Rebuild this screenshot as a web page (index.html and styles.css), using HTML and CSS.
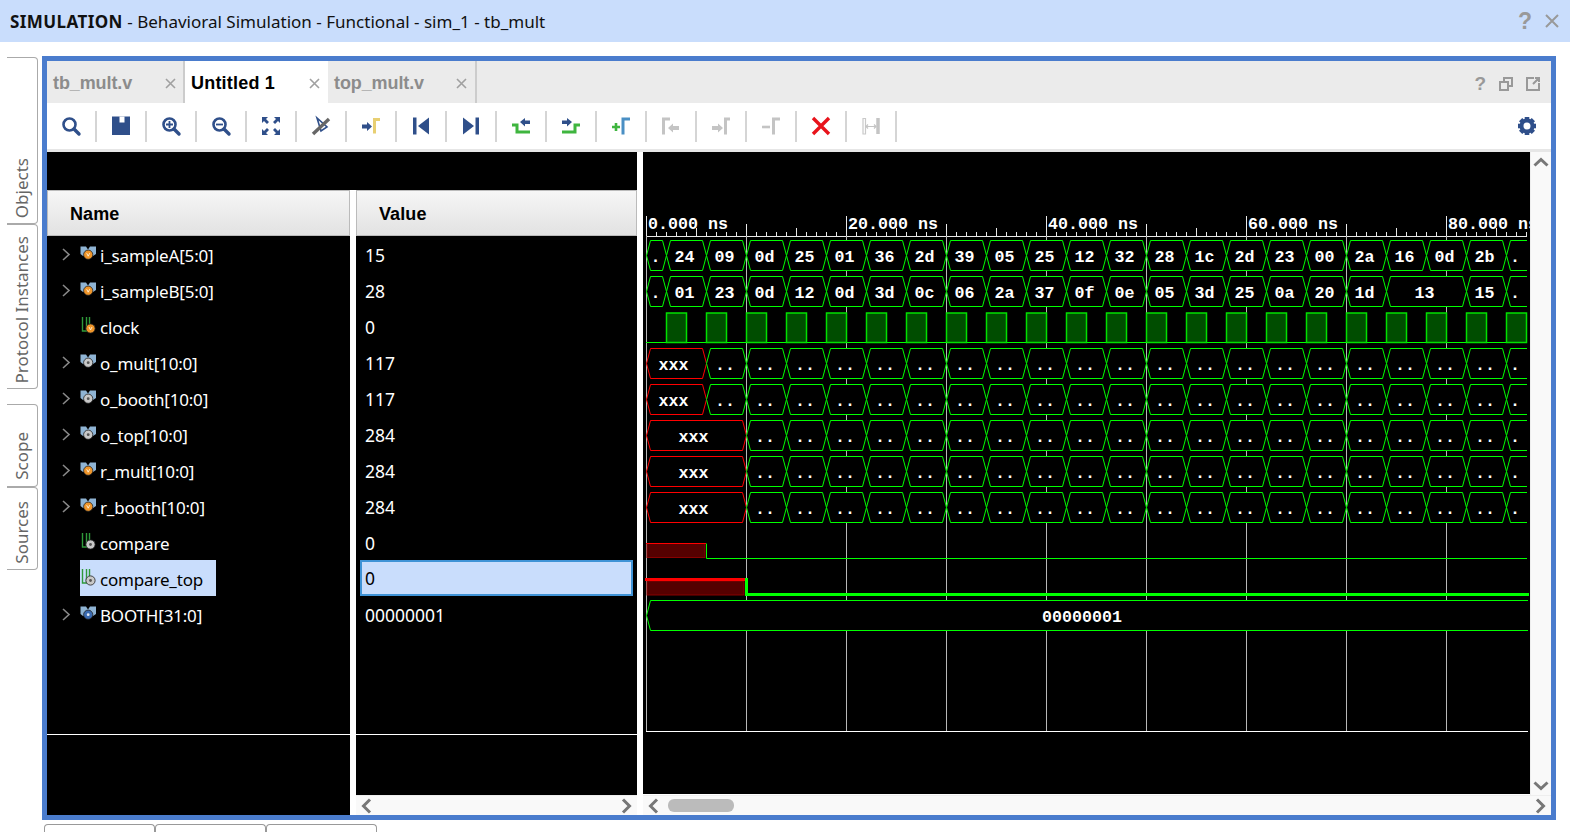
FILE: index.html
```html
<!DOCTYPE html>
<html lang="en">
<head>
    <meta charset="UTF-8">
    <title>Simulation</title>
    <link rel="stylesheet" href="styles.css">
</head>
<body>
    <div class="titlebar">
        <div class="title"><strong>SIMULATION</strong> - Behavioral Simulation - Functional - sim_1 - tb_mult</div>
        <span class="help">?</span>
        <svg class="title-close" width="14" height="14" viewBox="0 0 14 14"><path d="M1 1L13 13M13 1L1 13"/></svg>
    </div>

    <div class="workspace">
        <div class="sidetabs">
            <div class="sidegroup">
                <div class="sidetab objects"><span>Objects</span></div>
                <div class="sidetab protocol"><span>Protocol Instances</span></div>
            </div>
            <div class="sidegroup">
                <div class="sidetab scope"><span>Scope</span></div>
                <div class="sidetab sources"><span>Sources</span></div>
            </div>
        </div>

        <div class="panel">
            <div class="tabbar">
                <div class="tab tab-first"><span>tb_mult.v</span><svg class="tab-x" width="11" height="11" viewBox="0 0 11 11"><path d="M1 1L10 10M10 1L1 10"/></svg></div>
                <div class="tab tab-on"><span>Untitled 1</span><svg class="tab-x" width="11" height="11" viewBox="0 0 11 11"><path d="M1 1L10 10M10 1L1 10"/></svg></div>
                <div class="tab tab-last"><span>top_mult.v</span><svg class="tab-x" width="11" height="11" viewBox="0 0 11 11"><path d="M1 1L10 10M10 1L1 10"/></svg></div>
                <div class="tab-actions">
                    <span class="panel-help">?</span>
                    <svg width="14" height="14" viewBox="0 0 14 14" class="grey-icon"><rect x="1" y="5" width="8" height="8"/><path d="M5 5V1H13V9H9"/></svg>
                    <svg width="14" height="14" viewBox="0 0 14 14" class="grey-icon"><path d="M8 1H1V13H13V6M7 7L13 1M9 1H13V5"/></svg>
                </div>
            </div>

            <div class="toolbar" id="toolbar"></div>

            <div class="sim">
                <div class="names">
                    <div class="topblack"></div>
                    <div class="head"><div class="head-cell head-name">Name</div><div class="head-gap"></div><div class="head-cell head-value">Value</div></div>
                    <div class="lists">
                        <div class="name-col" id="names"></div>
                        <div class="value-col">
                            <div class="value-list" id="values"></div>
                            <div class="hscroll">
                                <svg width="12" height="16" viewBox="0 0 12 16"><path d="M10 1.500L3.500 8L10 14.500"/></svg>
                                <svg width="12" height="16" viewBox="0 0 12 16"><path d="M2 1.500L8.500 8L2 14.500"/></svg>
                            </div>
                        </div>
                    </div>
                </div>

                <div class="wave-col">
                    <div class="wave-main">
                        <svg id="wave" class="wave" width="887" height="642" viewBox="643 152 887 642"></svg>
                        <div class="vscroll">
                            <svg width="16" height="12" viewBox="0 0 16 12"><path d="M1.500 9.500L8 3.500L14.500 9.500"/></svg>
                            <svg width="16" height="12" viewBox="0 0 16 12"><path d="M1.500 2.500L8 8.500L14.500 2.500"/></svg>
                        </div>
                    </div>
                    <div class="hscroll">
                        <svg width="12" height="16" viewBox="0 0 12 16"><path d="M10 1.500L3.500 8L10 14.500"/></svg>
                        <div class="thumb"></div>
                        <svg class="push" width="12" height="16" viewBox="0 0 12 16"><path d="M2 1.500L8.500 8L2 14.500"/></svg>
                    </div>
                </div>
            </div>
        </div>
    </div>

    <div class="bottomtabs">
        <div class="bottomtab"></div>
        <div class="bottomtab"></div>
        <div class="bottomtab"></div>
    </div>

    <script src="wave.js"></script>
</body>
</html>
```

FILE: styles.css
```css
* {
  box-sizing: border-box;
}

html, body {
  margin: 0;
  height: 832px;
  overflow: hidden;
  background-color: #fff;
}

body {
  font-family: "Noto Sans", sans-serif;
  color: #111;
}

.titlebar {
  height: 42px;
  background-color: #c9ddfc;
  display: flex;
  align-items: center;
  padding-left: 10px;
}

.title {
  font-size: 17.05px;
  flex: 1;
}

.title strong {
  letter-spacing: 0.4px;
}

.help {
  font-family: "Liberation Sans", sans-serif;
  font-weight: bold;
  font-size: 23px;
  color: #999;
  margin-right: 13px;
}

.title-close {
  margin-right: 11px;
  fill: none;
  stroke: #999;
  stroke-width: 2;
}

.workspace {
  display: flex;
  height: 778px;
  padding-top: 14px;
}

.sidetabs {
  width: 42px;
  padding: 1px 0 0 7px;
}

.sidegroup {
  margin-bottom: 15px;
}

.sidetab {
  width: 31px;
  border: 1px solid #aaa;
  border-left: none;
  border-radius: 0 4px 4px 0;
  display: flex;
  align-items: flex-end;
  justify-content: center;
  padding: 0 1px 5px 0;
  color: #666;
  font-size: 17px;
}

.sidetab span {
  writing-mode: vertical-rl;
  transform: rotate(180deg);
  line-height: 28px;
}

.objects { height: 167px; }
.protocol { height: 165px; }
.scope { height: 83px; padding-bottom: 6px; }
.sources { height: 83px; }

.panel {
  width: 1514px;
  height: 764px;
  border: 5px solid #4a7ccd;
  background-color: #fff;
  display: flex;
  flex-direction: column;
}

.tabbar {
  height: 42px;
  background-color: #ebebeb;
  display: flex;
  flex-shrink: 0;
  font-family: "Liberation Sans", sans-serif;
  font-weight: bold;
  font-size: 18px;
}

.tab {
  display: flex;
  align-items: center;
  justify-content: space-between;
  color: #8c8c8c;
  padding: 2px 0 0 6px;
  letter-spacing: -0.1px;
}

.tab-x {
  fill: none;
  stroke: #a0a0a0;
  stroke-width: 1.6;
}

.tab-first {
  width: 138px;
  padding-right: 7px;
  border-right: 2px solid #ccc;
}

.tab-on {
  width: 143px;
  background-color: #fff;
  color: #000;
  padding-right: 8.5px;
  letter-spacing: 0.2px;
}

.tab-last {
  width: 149px;
  padding-right: 8px;
  border-right: 2px solid #ccc;
}

.tab-actions {
  margin-left: auto;
  display: flex;
  align-items: center;
  gap: 13px;
  padding: 3px 11px 0 0;
}

.panel-help {
  font-size: 19px;
  color: #999;
}

.grey-icon {
  fill: none;
  stroke: #999;
  stroke-width: 2;
}

.toolbar {
  height: 46px;
  flex-shrink: 0;
  display: flex;
  align-items: center;
  border-bottom: 3px solid #e6e6e6;
  box-sizing: content-box;
}

.tool {
  width: 50px;
  height: 31px;
  display: flex;
  align-items: center;
  justify-content: center;
  border-right: 2px solid #d5d5d5;
}

.tool-gear {
  width: 24px;
  border-right: none;
  margin-left: auto;
  margin-right: 12px;
}

.sim {
  flex: 1;
  display: flex;
  min-height: 0;
}

.names {
  width: 590px;
  display: flex;
  flex-direction: column;
  flex-shrink: 0;
}

.topblack {
  height: 38px;
  background-color: #000;
}

.head {
  height: 46px;
  display: flex;
  font-family: "Liberation Sans", sans-serif;
  font-weight: bold;
  font-size: 18px;
  letter-spacing: 0.1px;
  color: #000;
}

.head-cell {
  background: linear-gradient(#f6f6f6, #e2e2e2);
  border: 1px solid #bbb;
  padding-top: 2px;
  display: flex;
  align-items: center;
}

.head-name {
  width: 303px;
  padding-left: 22px;
}

.head-gap {
  width: 6px;
}

.head-value {
  flex: 1;
  padding-left: 22px;
}

.lists {
  flex: 1;
  display: flex;
  min-height: 0;
  gap: 6px;
}

.name-col {
  width: 303px;
  background-color: #000;
  position: relative;
}

.value-col {
  flex: 1;
  display: flex;
  flex-direction: column;
}

.value-list {
  flex: 1;
  background-color: #000;
  position: relative;
}

.rule {
  position: absolute;
  left: 0;
  right: 0;
  top: 498px;
  height: 1px;
  background-color: #fff;
}

.row {
  height: 36px;
  display: flex;
  align-items: center;
  color: #fff;
  font-size: 17.5px;
}

.row-name {
  padding-left: 15px;
  font-size: 17px;
  letter-spacing: -0.18px;
}

.arrow {
  width: 18px;
  height: 16px;
  fill: none;
  stroke: #888;
  stroke-width: 1.6;
  flex-shrink: 0;
}

.sig-icon {
  width: 18px;
  height: 18px;
  flex-shrink: 0;
  margin-right: 2px;
  overflow: visible;
}

.name-box {
  display: flex;
  align-items: center;
  height: 36px;
  padding-top: 2px;
}

.row-name.selected .name-box {
  background-color: #c9ddfc;
  color: #000;
  padding-right: 13px;
}

.row-value {
  padding: 0 4px;
}

.value-box {
  width: 100%;
  height: 36px;
  display: flex;
  align-items: center;
  padding: 2px 0 0 5px;
}

.value-box.selected {
  background-color: #c9ddfc;
  border: 2px solid #3f93d6;
  color: #000;
  padding: 0 0 0 3px;
}

.hscroll {
  height: 20px;
  flex-shrink: 0;
  background-color: #f9f9f9;
  display: flex;
  align-items: center;
  justify-content: space-between;
  padding: 0 4px;
  border-top: 1px solid #eee;
}

.hscroll svg, .vscroll svg {
  fill: none;
  stroke: #777;
  stroke-width: 3;
  flex-shrink: 0;
}

.wave-col {
  flex: 1;
  margin-left: 6px;
  display: flex;
  flex-direction: column;
  min-width: 0;
  background-color: #fff;
}

.wave-main {
  flex: 1;
  display: flex;
  min-height: 0;
}

.wave {
  display: block;
  background-color: #000;
  flex-shrink: 0;
}

.vscroll {
  flex: 1;
  background-color: #f9f9f9;
  display: flex;
  flex-direction: column;
  justify-content: space-between;
  align-items: center;
  padding: 4px 0 3px;
  border-left: 1px solid #eee;
}

.thumb {
  width: 66px;
  height: 13px;
  border-radius: 6px;
  background-color: #bbb;
  margin-left: 9px;
}

.push {
  margin-left: auto;
}

.wave text {
  font-family: "Liberation Mono", monospace;
  font-weight: bold;
  font-size: 16.67px;
  fill: #fff;
}

.bottomtabs {
  display: flex;
  padding-left: 44px;
  height: 12px;
  margin-top: 4px;
}

.bottomtab {
  width: 111px;
  border: 1px solid #999;
  border-bottom: none;
  border-radius: 4px 4px 0 0;
}
```

FILE: wave.js
```js
// signal table: label, value, icon type, icon colour, centre colour
var signals = [
    ['i_sampleA[5:0]', '15', 'bus', '#f0962a', '#fff2d8'],
    ['i_sampleB[5:0]', '28', 'bus', '#f0962a', '#fff2d8'],
    ['clock', '0', 'bit', '#f0962a', '#fff2d8'],
    ['o_mult[10:0]', '117', 'bus', '#c8c8c8', '#555'],
    ['o_booth[10:0]', '117', 'bus', '#c8c8c8', '#555'],
    ['o_top[10:0]', '284', 'bus', '#c8c8c8', '#555'],
    ['r_mult[10:0]', '284', 'bus', '#f0962a', '#fff2d8'],
    ['r_booth[10:0]', '284', 'bus', '#f0962a', '#fff2d8'],
    ['compare', '0', 'bit', '#c8c8c8', '#555'],
    ['compare_top', '0', 'bit', '#c8c8c8', '#555'],
    ['BOOTH[31:0]', '00000001', 'bus', '#3a6ab0', '#dfe8f5']
];

function dot(cx, cy, color, mark) {
    var inner = mark === '#fff2d8'
        ? '<path d="M' + (cx - 1.5) + ' ' + (cy - 1.5) + 'L' + cx + ' ' + (cy + 1.5) + 'L' + (cx + 1.5) + ' ' + (cy - 1.5) + '" fill="none" stroke="' + mark + '" stroke-width="0.9"/>'
        : '<circle cx="' + cx + '" cy="' + cy + '" r="1.4" fill="' + mark + '"/>';
    return '<circle cx="' + cx + '" cy="' + cy + '" r="4.6" fill="' + color + '" stroke="#222" stroke-width="0.8"/>' + inner;
}

function busIcon(color, mark) {
    return '<svg class="sig-icon" viewBox="0 0 18 18">' +
        '<path d="M0.500 0.500H6L8 3.500L10 0.500H16V8L13 10H3L0.500 8Z" fill="#8fb4d4"/>' +
        dot(8.2, 8.7, color, mark) + '</svg>';
}

function bitIcon(color, mark) {
    return '<svg class="sig-icon" viewBox="0 0 18 18">' +
        '<path d="M2.500 -1V13H6.500V-1M9.500 -1V6" fill="none" stroke="#2f9a3a" stroke-width="1.400"/>' +
        dot(10.5, 10.5, color, mark) + '</svg>';
}

var namesHtml = '';
var valuesHtml = '';
signals.forEach(function (s) {
    var sel = s[0] === 'compare_top' ? ' selected' : '';
    var arrow = s[2] === 'bus'
        ? '<svg class="arrow" viewBox="0 0 18 16"><path d="M1 3L7 8.500L1 14"/></svg>'
        : '<span class="arrow"></span>';
    var icon = s[2] === 'bus' ? busIcon(s[3], s[4]) : bitIcon(s[3], s[4]);
    namesHtml += '<div class="row row-name' + sel + '">' + arrow +
        '<div class="name-box">' + icon + s[0] + '</div></div>';
    valuesHtml += '<div class="row row-value"><div class="value-box' + sel + '">' + s[1] + '</div></div>';
});
document.getElementById('names').innerHTML = namesHtml + '<div class="rule"></div>';
document.getElementById('values').innerHTML = valuesHtml + '<div class="rule"></div>';

// toolbar icons
var navy = '#2f4f8a';
var lens = '<circle cx="10.500" cy="10.500" r="6" fill="none" stroke="' + navy + '" stroke-width="2.600"/><path d="M15 15L20 20" stroke="' + navy + '" stroke-width="3.400" stroke-linecap="round"/>';
var tools = [
    lens,
    '<path d="M3 2.500H21V21H3Z" fill="' + navy + '"/><rect x="10.500" y="2.500" width="5" height="6" fill="#fff"/>',
    lens + '<path d="M7 10.500H14M10.500 7V14" stroke="' + navy + '" stroke-width="1.800"/>',
    lens + '<path d="M7 10.500H14" stroke="' + navy + '" stroke-width="1.800"/>',
    '<path d="M3 3H9L7 5L10 8L8 10L5 7L3 9ZM21 3V9L19 7L16 10L14 8L17 5L15 3ZM3 21V15L5 17L8 14L10 16L7 19L9 21ZM21 21H15L17 19L14 16L16 14L19 17L21 15Z" fill="' + navy + '"/>',
    '<path d="M8 4L12 17L18 13Z" fill="none" stroke="' + navy + '" stroke-width="1.600"/><path d="M4 20L20 5" stroke="#666" stroke-width="3.400"/>',
    '<path d="M3 10.500H8V8L13 12.500L8 17V14.500H3Z" fill="' + navy + '"/><path d="M15.500 19.500V5.500H21" fill="none" stroke="#e8cf72" stroke-width="3"/>',
    '<path d="M4 3.500H7.500V20.500H4Z" fill="' + navy + '"/><path d="M20 3.500V20.500L9 12Z" fill="' + navy + '"/>',
    '<path d="M16.500 3.500H20V20.500H16.500Z" fill="' + navy + '"/><path d="M4 3.500V20.500L15 12Z" fill="' + navy + '"/>',
    '<path d="M11 8L16 4V6.500H21V10H16V12.500Z" fill="' + navy + '"/><path d="M3 11H8V18H21" fill="none" stroke="#3fb53f" stroke-width="3"/>',
    '<path d="M13 8L8 4V6.500H3V10H8V12.500Z" fill="' + navy + '"/><path d="M3 18H16V11H21" fill="none" stroke="#3fb53f" stroke-width="3"/>',
    '<path d="M3 13H11M7 9V17" stroke="#3fb53f" stroke-width="2.600"/><path d="M14 20.500V5H21" fill="none" stroke="#4a8fc4" stroke-width="3"/>',
    '<path d="M4.500 20.500V5H11" fill="none" stroke="#c4c4c4" stroke-width="3"/><path d="M9 14L14 9.500V12H20V16H14V18.500Z" fill="#c4c4c4"/>',
    '<path d="M16.500 20.500V5H21" fill="none" stroke="#c4c4c4" stroke-width="3"/><path d="M3 12H9V9.500L14 14L9 18.500V16H3Z" fill="#c4c4c4"/>',
    '<path d="M3 13H11" stroke="#c4c4c4" stroke-width="2.600"/><path d="M14.500 20.500V5H21" fill="none" stroke="#c4c4c4" stroke-width="3"/>',
    '<path d="M4 4L20 20M20 4L4 20" stroke="#e8131b" stroke-width="3.400"/>',
    '<path d="M4 4.500H6.500V20H4Z" fill="none" stroke="#c9c9c9" stroke-width="1.200"/><path d="M19 4V20" stroke="#c4c4c4" stroke-width="3.500"/><path d="M7 12.500H17M9 10.500L7 12.500L9 14.500M15 10.500L17 12.500L15 14.500" fill="none" stroke="#c4c4c4" stroke-width="1.200"/>'
];
var toolHtml = '';
tools.forEach(function (t) {
    toolHtml += '<div class="tool"><svg width="24" height="24" viewBox="0 0 24 24">' + t + '</svg></div>';
});
var gearTeeth = '';
for (var n = 0; n < 8; n++) {
    gearTeeth += '<rect x="9.700" y="3" width="4.600" height="5" fill="' + navy + '" transform="rotate(' + (n * 45) + ' 12 12)"/>';
}
toolHtml += '<div class="tool tool-gear"><svg width="24" height="24" viewBox="0 0 24 24">' + gearTeeth +
    '<circle cx="12" cy="12" r="5.500" fill="none" stroke="' + navy + '" stroke-width="4"/></svg></div>';
document.getElementById('toolbar').innerHTML = toolHtml;

// waveform
var GREEN = '#00ff00';
var RED = '#ff0000';
var svg = '';
var X0 = 646.5, X1 = 1527;

function rowTop(i) { return 240.5 + 36 * i; }

// one bus segment, from x1 to x2; the last one runs off the right edge with no closing bow
function seg(x1, x2, y, color, label, tx) {
    var bot = y + 30, mid = y + 15;
    var left = (x1 + 4) + ',' + y + ' ' + x1 + ',' + mid + ' ' + (x1 + 4) + ',' + bot;
    var o;
    if (x2 >= X1) {
        o = '<polygon points="' + left + ' ' + x2 + ',' + bot + ' ' + x2 + ',' + y + '" fill="#000"/>' +
            '<polyline points="' + x2 + ',' + y + ' ' + left + ' ' + x2 + ',' + bot + '" fill="none" stroke="' + color + '"/>';
    } else {
        o = '<polygon points="' + left + ' ' + (x2 - 4) + ',' + bot + ' ' + x2 + ',' + mid + ' ' + (x2 - 4) + ',' + y +
            '" fill="#000" stroke="' + color + '"/>';
    }
    return o + '<text x="' + tx + '" y="' + (y + 21) + '" text-anchor="middle">' + label + '</text>';
}

// ruler
svg += '<path d="M646 236.500H1527" stroke="#e8e8e8" fill="none"/>';
for (var t = 0; t <= 88; t++) {
    var tickX = 646.5 + t * 10;
    var h = t % 10 === 0 ? (t % 20 === 0 ? 20 : 12) : (t % 5 === 0 ? 8 : 4);
    svg += '<path d="M' + tickX + ' 236V' + (236 - h) + '" stroke="#e8e8e8"/>';
}
for (var g = 0; g < 9; g++) {
    svg += '<path d="M' + (646.5 + g * 100) + ' 236V731" stroke="#b8b8b8"/>';
}
svg += '<path d="M646 731.500H1528" stroke="#fff"/>';
['0.000 ns', '20.000 ns', '40.000 ns', '60.000 ns', '80.000 ns'].forEach(function (lab, i) {
    svg += '<text x="' + (648 + i * 200) + '" y="229">' + lab + '</text>';
});

// input buses
var busA = '24 09 0d 25 01 36 2d 39 05 25 12 32 28 1c 2d 23 00 2a 16 0d 2b'.split(' ');
var busB = '01 23 0d 12 0d 3d 0c 06 2a 37 0f 0e 05 3d 25 0a 20 1d 13 13 15'.split(' ');
var edge = function (k) { return 666.5 + k * 40; };

[busA, busB].forEach(function (vals, r) {
    var y = rowTop(r);
    svg += seg(X0, edge(0), y, GREEN, '.', 655.5);
    for (var k = 0; k < vals.length; k++) {
        if (r === 1 && k === 18) {
            svg += seg(edge(k), edge(k + 2), y, GREEN, vals[k], 684.5 + (k + 0.5) * 40);
            k++;
            continue;
        }
        svg += seg(edge(k), edge(k + 1), y, GREEN, vals[k], 684.5 + k * 40);
    }
    svg += seg(edge(21), X1, y, GREEN, '.', 1515);
});

// clock
svg += '<path d="M646 342.500H1527" stroke="' + GREEN + '"/>';
for (var c = 0; c < 22; c++) {
    var cx = 666.5 + c * 40;
    svg += '<path d="M' + cx + ' 342.500V313H' + (cx + 20) + 'V342.500Z" fill="#004d00" stroke="#00e000" stroke-width="1.500"/>';
}

// unknown-then-settled buses
[[3, 706.5], [4, 706.5], [5, 746.5], [6, 746.5], [7, 746.5]].forEach(function (row) {
    var y = rowTop(row[0]);
    var x = row[1];
    svg += seg(X0, x, y, RED, 'xxx', (X0 + x) / 2 - 3);
    for (var q = x; q < 1500; q += 40) {
        svg += seg(q, q + 40, y, GREEN, '..', q + 18.5);
    }
    svg += seg(1506.5, X1, y, GREEN, '.', 1515);
});

// compare
svg += '<rect x="647" y="543.500" width="58" height="14" fill="#550000" stroke="#8a0000"/>';
svg += '<path d="M706.500 543.500V558.500H1527" fill="none" stroke="' + GREEN + '"/>';
svg += '<path d="M646 543.500H706" stroke="' + RED + '"/>';

// compare_top, drawn heavier because it is selected
svg += '<rect x="647" y="581" width="97" height="14" fill="#550000" stroke="#8a0000"/>';
svg += '<path d="M746.500 578V594.500H1529" fill="none" stroke="' + GREEN + '" stroke-width="3"/>';
svg += '<path d="M645 579.500H745" stroke="' + RED + '" stroke-width="3"/>';

// BOOTH
svg += seg(X0, 1528, 600.5, GREEN, '00000001', 1082);

document.getElementById('wave').innerHTML = svg;
```
